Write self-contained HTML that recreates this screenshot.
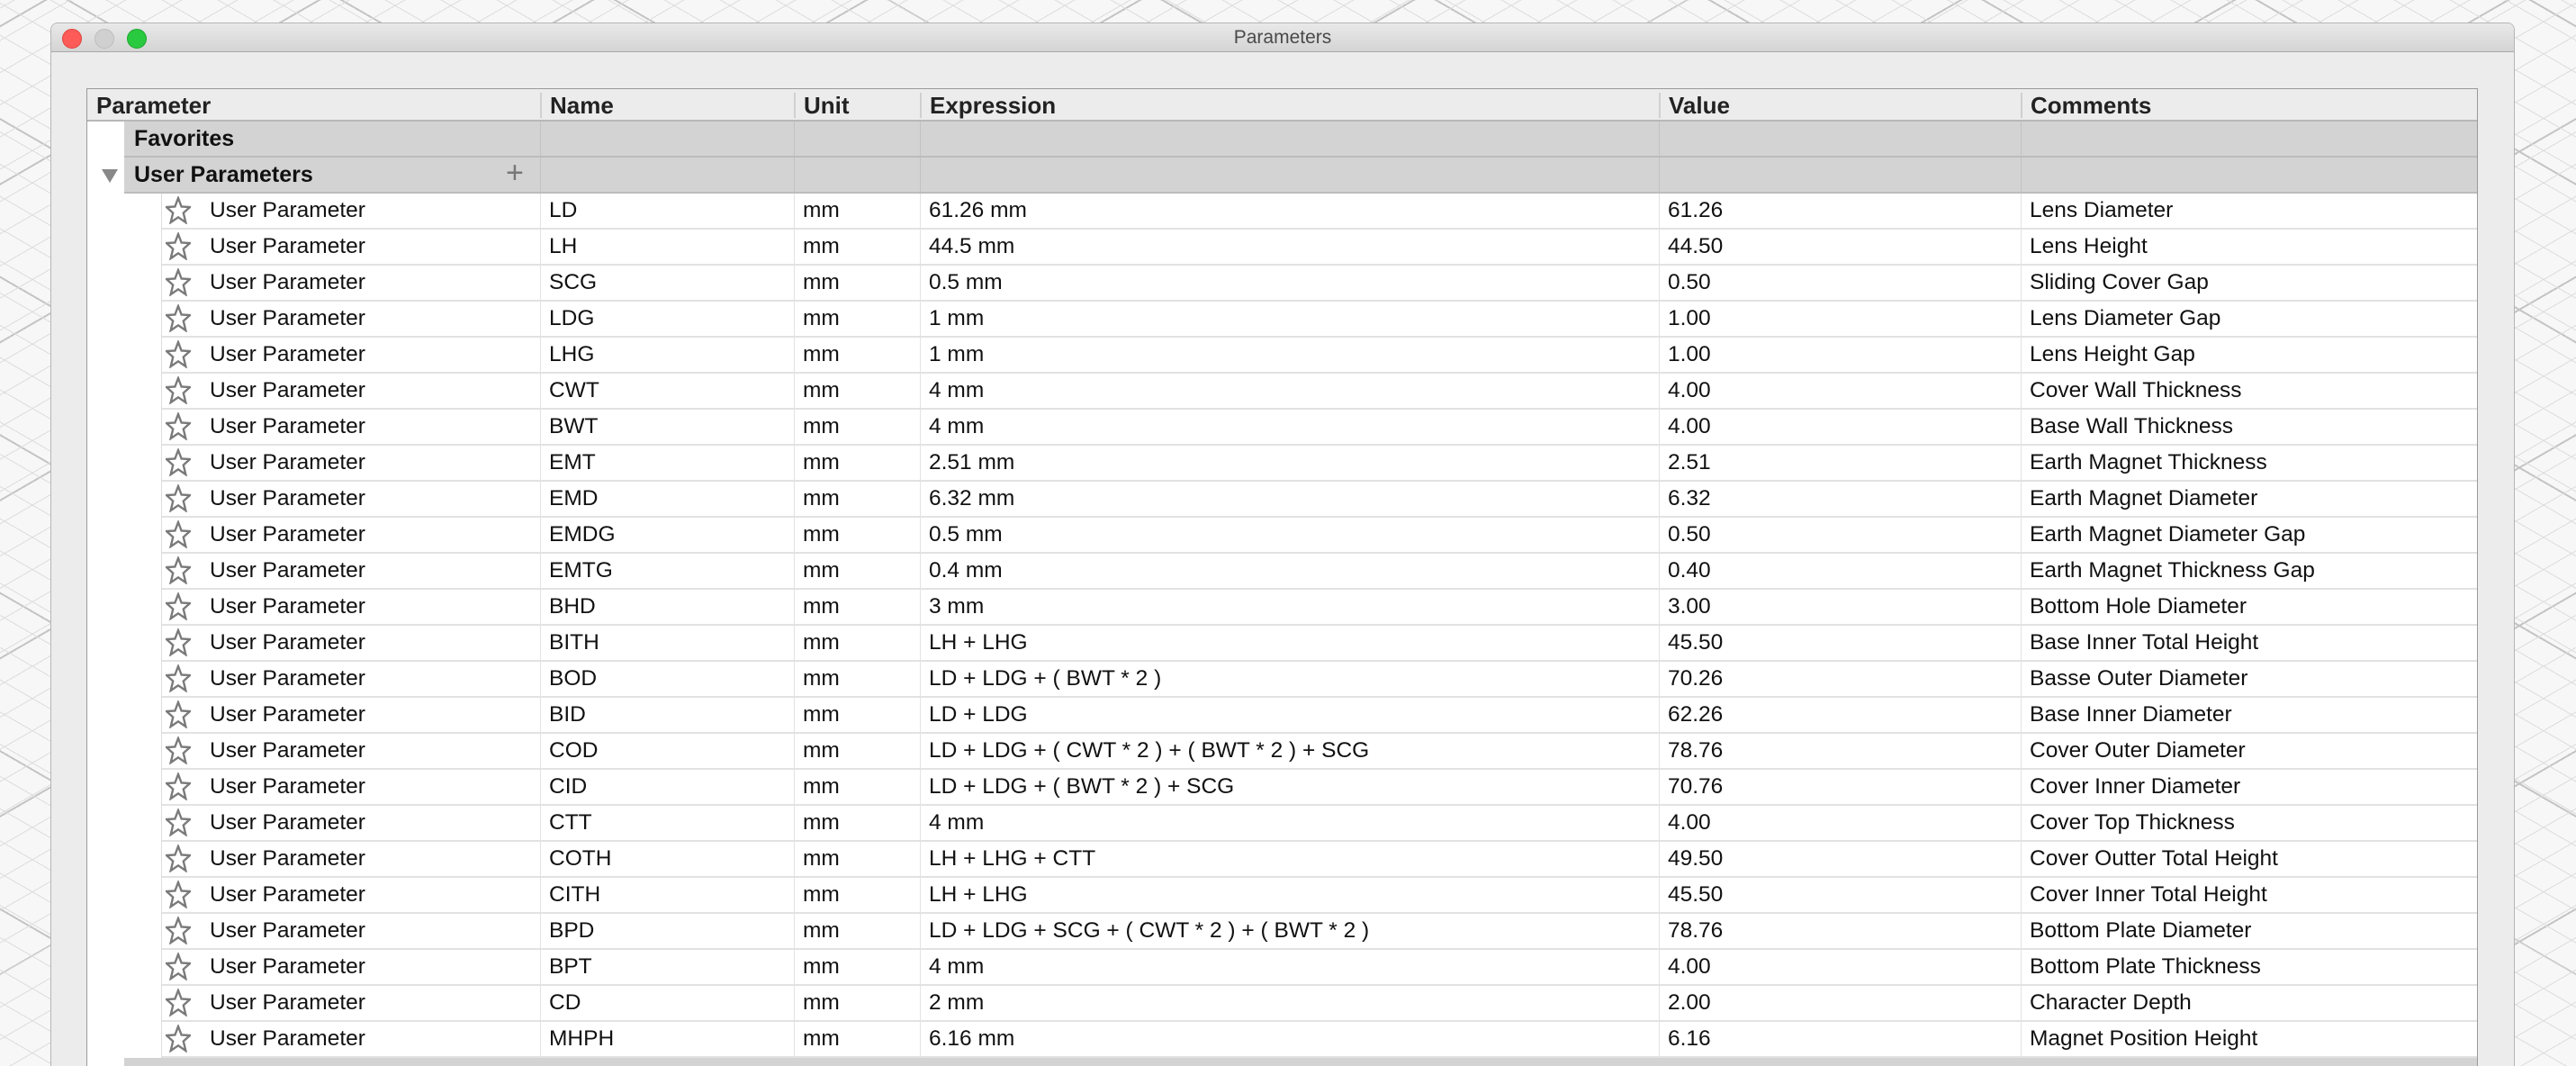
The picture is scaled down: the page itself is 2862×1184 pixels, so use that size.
<!DOCTYPE html>
<html><head><meta charset="utf-8"><style>
*{margin:0;padding:0;box-sizing:border-box}
html{width:2862px;height:1184px;overflow:hidden}
body{width:2862px;height:1184px;overflow:hidden;position:relative;font-family:"Liberation Sans",Arial,sans-serif;
background-color:#f7f7f7;
background-image:repeating-linear-gradient(30deg,transparent 0 30px,#dcdcdc 30px 31px),repeating-linear-gradient(-30deg,transparent 0 30px,#dcdcdc 30px 31px),repeating-linear-gradient(30deg,transparent 0 150px,#c4c4c4 150px 152px),repeating-linear-gradient(-30deg,transparent 0 150px,#c4c4c4 150px 152px);}
.win{position:absolute;left:56px;top:25px;width:2738px;height:1159px;background:#ececec;border:1px solid #b5b5b5;border-bottom:none;border-radius:8px 8px 0 0;overflow:hidden}
.tb{position:absolute;left:0;top:0;right:0;height:32px;background:linear-gradient(#e9e9e9,#d4d4d4);border-bottom:1px solid #a9a9a9}
.tb .t{position:absolute;left:0;right:0;top:4px;text-align:center;font-size:21px;color:#4a4a4a}
.dot{position:absolute;top:6px;width:22px;height:22px;border-radius:50%}
.tab{position:absolute;left:96px;top:98px;width:2657px;height:1086px;background:#fff;border:1px solid #9a9a9a;border-bottom:none;overflow:hidden}
.hd{position:absolute;left:0;top:0;right:0;height:36px;background:#ececec;border-bottom:2px solid #b8b8b8}
.c{position:absolute;white-space:nowrap}
.hd .c{top:0;height:36px;line-height:36px;font-weight:bold;font-size:26px;color:#222;padding-left:9px}
.hd .c.s{border-left:2px solid #d0d0d0;height:28px;top:4px;line-height:28px}
.g{position:absolute;left:41px;right:0;height:40px;background:#d3d3d3;border-bottom:2px solid #bcbcbc}
.g .c{top:0;height:38px;line-height:38px;font-weight:bold;font-size:25px;color:#111}
.vl{position:absolute;top:0;bottom:0;width:1px;background:#c2c2c2}
.r{position:absolute;left:82px;right:0;height:40px;border-bottom:2px solid #e2e2e2;border-left:1px solid #dcdcdc}
.r .c{top:0;height:38px;line-height:38px;font-size:24.5px;color:#111}
.r .vl{background:#e2e2e2}
.star{position:absolute;left:4px;top:3px}
</style></head><body>
<div class="win">
 <div class="tb"><div class="dot" style="left:12px;background:#fc5b57;border:1px solid #e0443e"></div><div class="dot" style="left:48px;background:#d0d0d0;border:1px solid #bdbdbd"></div><div class="dot" style="left:84px;background:#29c940;border:1px solid #1fa62f"></div><div class="t">Parameters</div></div>
</div>
<div class="tab" id="tab">
 <div class="hd">
  <div class="c" style="left:1px">Parameter</div>
  <div class="c s" style="left:503px">Name</div>
  <div class="c s" style="left:785px">Unit</div>
  <div class="c s" style="left:925px">Expression</div>
  <div class="c s" style="left:1746px">Value</div>
  <div class="c s" style="left:2148px">Comments</div>
 </div>
 <div class="g" style="top:36px"><div class="c" style="left:11px">Favorites</div><div class="vl" style="left:462px"></div><div class="vl" style="left:744px"></div><div class="vl" style="left:884px"></div><div class="vl" style="left:1705px"></div><div class="vl" style="left:2107px"></div></div>
 <div class="g" style="top:76px"><div class="c" style="left:11px">User Parameters</div><div class="c" style="left:424px;font-size:34px;font-weight:normal;color:#777;top:-2px">+</div><div class="vl" style="left:462px"></div><div class="vl" style="left:744px"></div><div class="vl" style="left:884px"></div><div class="vl" style="left:1705px"></div><div class="vl" style="left:2107px"></div></div>
 <div style="position:absolute;left:16px;top:89px;width:0;height:0;border-left:9px solid transparent;border-right:9px solid transparent;border-top:15px solid #888"></div>
 <div id="rows"></div>
 <div class="g" style="top:1076px"></div>
</div>
<script>
var d=[["LD","61.26 mm","61.26","Lens Diameter"],["LH","44.5 mm","44.50","Lens Height"],["SCG","0.5 mm","0.50","Sliding Cover Gap"],["LDG","1 mm","1.00","Lens Diameter Gap"],["LHG","1 mm","1.00","Lens Height Gap"],["CWT","4 mm","4.00","Cover Wall Thickness"],["BWT","4 mm","4.00","Base Wall Thickness"],["EMT","2.51 mm","2.51","Earth Magnet Thickness"],["EMD","6.32 mm","6.32","Earth Magnet Diameter"],["EMDG","0.5 mm","0.50","Earth Magnet Diameter Gap"],["EMTG","0.4 mm","0.40","Earth Magnet Thickness Gap"],["BHD","3 mm","3.00","Bottom Hole Diameter"],["BITH","LH + LHG","45.50","Base Inner Total Height"],["BOD","LD + LDG + ( BWT * 2 )","70.26","Basse Outer Diameter"],["BID","LD + LDG","62.26","Base Inner Diameter"],["COD","LD + LDG + ( CWT * 2 ) + ( BWT * 2 ) + SCG","78.76","Cover Outer Diameter"],["CID","LD + LDG + ( BWT * 2 ) + SCG","70.76","Cover Inner Diameter"],["CTT","4 mm","4.00","Cover Top Thickness"],["COTH","LH + LHG + CTT","49.50","Cover Outter Total Height"],["CITH","LH + LHG","45.50","Cover Inner Total Height"],["BPD","LD + LDG + SCG + ( CWT * 2 ) + ( BWT * 2 )","78.76","Bottom Plate Diameter"],["BPT","4 mm","4.00","Bottom Plate Thickness"],["CD","2 mm","2.00","Character Depth"],["MHPH","6.16 mm","6.16","Magnet Position Height"]];
var star='<svg class="star" width="28" height="31" viewBox="0 0 28 31"><path d="M14 2 L17.6 11.5 L27 12 L19.8 18.5 L22.3 29 L14 23.3 L5.7 29 L8.2 18.5 L1 12 L10.4 11.5 Z" fill="none" stroke="#7a7a7a" stroke-width="2.4" stroke-linejoin="miter"/></svg>';
var h='';
d.forEach(function(r,i){var t=116+i*40;
h+='<div class="r" style="top:'+t+'px">'+star+'<div class="c" style="left:53px">User Parameter</div>'+
'<div class="vl" style="left:420px"></div><div class="c" style="left:430px">'+r[0]+'</div>'+
'<div class="vl" style="left:702px"></div><div class="c" style="left:712px">mm</div>'+
'<div class="vl" style="left:842px"></div><div class="c" style="left:852px">'+r[1]+'</div>'+
'<div class="vl" style="left:1663px"></div><div class="c" style="left:1673px">'+r[2]+'</div>'+
'<div class="vl" style="left:2065px"></div><div class="c" style="left:2075px">'+r[3]+'</div></div>';});
document.getElementById('rows').innerHTML=h;
</script>
</body></html>
